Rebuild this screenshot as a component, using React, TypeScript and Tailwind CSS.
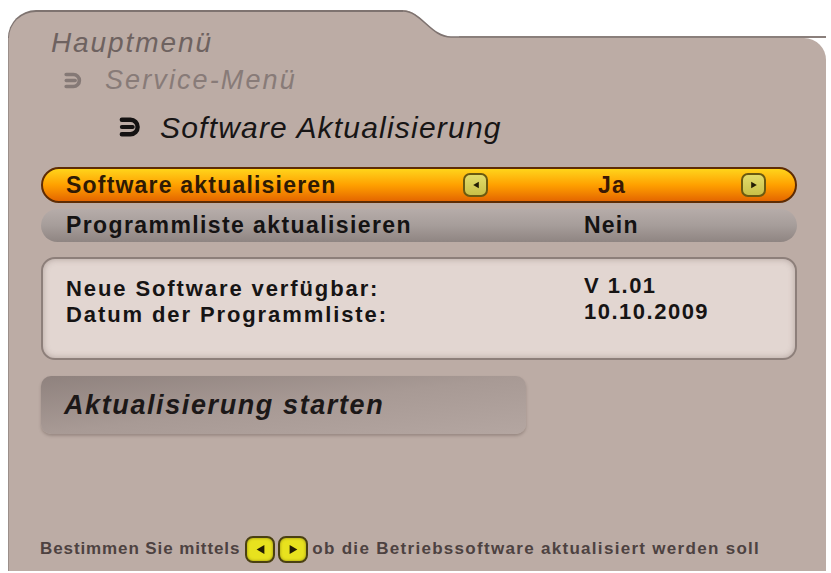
import type { ReactNode } from 'react';

function CrumbArrow({ className }: { className: string }): JSX.Element {
  return (
    <svg viewBox="0 0 22 18" className={className} fill="none" stroke="currentColor">
      <path d="M3.5 2.4 H11.4 A6.6 6.6 0 0 1 11.4 15.6 H3.5" strokeWidth="4" strokeLinecap="round" />
      <path d="M3.5 9 H13.5" strokeWidth="3.6" strokeLinecap="round" />
    </svg>
  );
}

function KeyButton({ dir, size }: { dir: 'left' | 'right'; size: 'row' | 'hint' }): JSX.Element {
  const box =
    size === 'row'
      ? 'h-[24px] w-[25px] rounded-[7px] border-2 border-[#6b5a10] bg-gradient-to-b from-[#e2dc6a] to-[#c9c048]'
      : 'h-[27px] w-[30px] rounded-[8px] border-2 border-[#4a4012] bg-[#e8e21e] shadow-[inset_0_0_3px_rgba(90,80,10,0.6)]';
  return (
    <span className={`inline-flex items-center justify-center ${box}`}>
      <svg viewBox="0 0 10 10" className={size === 'row' ? 'h-[8px] w-[8px]' : 'h-[11px] w-[11px]'} fill="#221c04">
        {dir === 'left' ? <path d="M8.5 1 L1.5 5 L8.5 9 Z" /> : <path d="M1.5 1 L8.5 5 L1.5 9 Z" />}
      </svg>
    </span>
  );
}

function InfoLine({ label, value }: { label: string; value: string }): JSX.Element {
  return (
    <div className="flex h-[26px] items-center text-[22px] font-bold text-[#161414]">
      <span className="w-[518px] tracking-[1.9px]">{label}</span>
      <span className="mt-[-5px] tracking-[1.5px]">{value}</span>
    </div>
  );
}

function Row({ active, children }: { active: boolean; children: ReactNode }): JSX.Element {
  return (
    <div
      className={
        active
          ? 'flex h-[36px] items-center rounded-full border-2 border-[#5e2c04] bg-gradient-to-b from-[#ffd41a] via-[#ffa000] to-[#e46600] pl-[23px] pr-[28px]'
          : 'flex h-[33px] items-center rounded-full bg-gradient-to-b from-[#b6aca9] via-[#a69d9a] to-[#8f8582] pl-[25px] pr-[28px]'
      }
    >
      {children}
    </div>
  );
}

export default function App(): JSX.Element {
  const panel = 'bg-[#bcaca5]';

  return (
    <div className="h-[573px] w-[831px] overflow-hidden bg-white pl-[8px] pr-[5px] pt-[10px] [font-family:'Liberation_Sans',Arial,sans-serif]">
      <div className="flex h-[28px]">
        <div className={`w-[395px] rounded-tl-[28px] border-l border-t-2 border-[#7e7370] ${panel}`} />
        <svg viewBox="0 0 56 28" className="h-[28px] w-[56px]" preserveAspectRatio="none">
          <path d="M0 0 C18 0 28 27 48 27 L56 27 L56 28 L0 28 Z" fill="#bcaca5" />
          <path d="M0 1 C18 1 28 27 48 27 L56 27" fill="none" stroke="#7e7370" strokeWidth="1.6" />
        </svg>
        <div className="flex-1 border-b-2 border-[#8a7f7b] bg-white" />
      </div>

      <div className={`flex h-[533px] flex-col rounded-tr-[22px] border-l border-[#9c8f8a] ${panel} pl-[32px] pr-[29px]`}>
        <div className="mt-[-12px] italic">
          <div className="ml-[10px] h-[34px] text-[28px] leading-[34px] tracking-[1.9px] text-[#6e6260]">Hauptmenü</div>
          <div className="mt-[3px] ml-[22px] flex h-[34px] items-center text-[27px] tracking-[2.1px] text-[#887b78]">
            <CrumbArrow className="mr-[22px] h-[17px] w-[20px] text-[#857976]" />
            Service-Menü
          </div>
          <div className="mt-[13px] ml-[77px] flex h-[34px] items-center text-[30px] tracking-[1.2px] text-[#171515]">
            <CrumbArrow className="mr-[18px] h-[20px] w-[24px] text-[#141212]" />
            Software Aktualisierung
          </div>
        </div>

        <div className="mt-[23px] flex flex-col gap-[6px] text-[23px] font-bold tracking-[1.2px]">
          <Row active>
            <span className="w-[397px] text-[#2e1a04]">Software aktualisieren</span>
            <KeyButton dir="left" size="row" />
            <span className="ml-[110px] w-[143px] text-[#3a1804]">Ja</span>
            <KeyButton dir="right" size="row" />
          </Row>
          <Row active={false}>
            <span className="w-[518px] tracking-[1.4px] text-[#151313]">Programmliste aktualisieren</span>
            <span className="text-[#151313]">Nein</span>
          </Row>
        </div>

        <div className="mt-[15px] h-[103px] rounded-[14px] border-2 border-[#8d7f7a] bg-[#e2d6d1] pl-[23px] pt-[16px] shadow-[inset_0_0_6px_rgba(120,100,95,0.45)]">
          <InfoLine label="Neue Software verfügbar:" value="V 1.01" />
          <InfoLine label="Datum der Programmliste:" value="10.10.2009" />
        </div>

        <div className="mt-[16px] flex h-[58px] w-[485px] items-center rounded-[10px] bg-gradient-to-br from-[#8f827e] via-[#a89a95] to-[#b4a6a1] pl-[23px] shadow-[0_2px_3px_rgba(90,75,70,0.35)]">
          <span className="text-[27px] font-bold italic tracking-[1.6px] text-[#1c1818]">Aktualisierung starten</span>
        </div>

        <div className="mt-[101px] flex h-[28px] items-center whitespace-nowrap text-[17px] font-bold tracking-[1.3px] text-[#4d4241]">
          <span className="ml-[-1px] tracking-[0.9px]">Bestimmen Sie mittels</span>
          <span className="ml-[5px] flex gap-[3px]">
            <KeyButton dir="left" size="hint" />
            <KeyButton dir="right" size="hint" />
          </span>
          <span className="ml-[4px]">ob die Betriebssoftware aktualisiert werden soll</span>
        </div>
      </div>
    </div>
  );
}
